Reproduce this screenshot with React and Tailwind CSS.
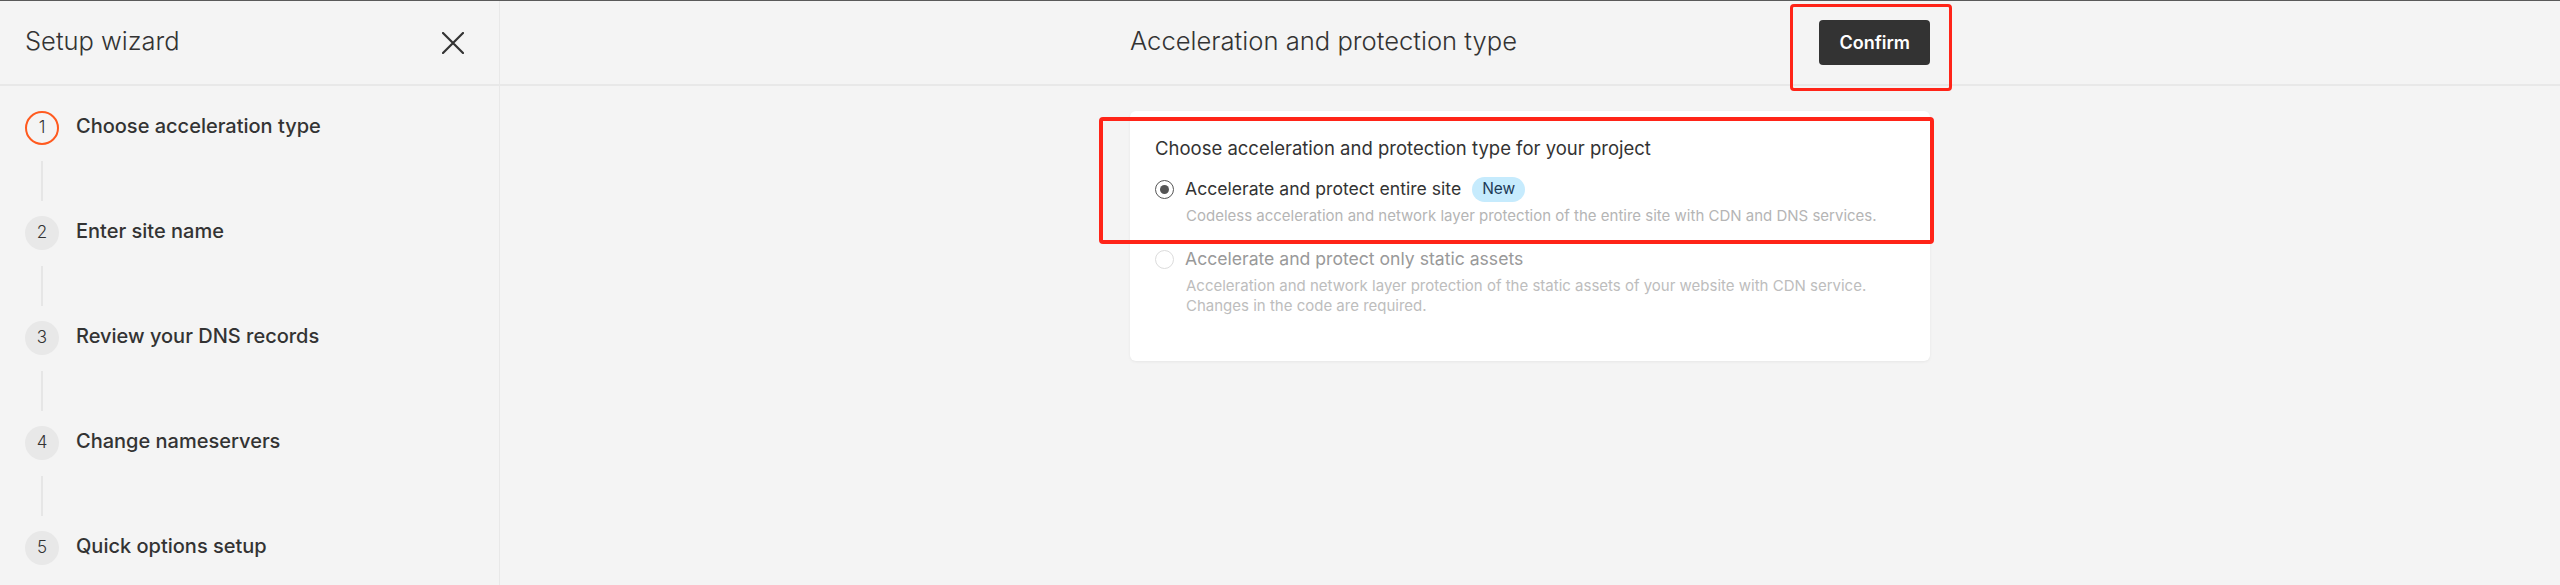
const steps = [
  'Choose acceleration type',
  'Enter site name',
  'Review your DNS records',
  'Change nameservers',
  'Quick options setup',
];

function Step({ n, label, active, last }) {
  return (
    <div>
      <div className="flex items-center gap-[17px] h-[34px]">
        <div
          className={`w-[34px] h-[34px] rounded-full flex items-center justify-center text-[17px] font-light text-[#333] shrink-0 ${
            active ? 'border-2 border-[#ff5a1f]' : 'bg-[#e8e8e8]'
          }`}
        >
          {n}
        </div>
        <span className="text-[20px] font-medium text-[#333] leading-[24px] -mt-[4px]">{label}</span>
      </div>
      {!last && <div className="ml-[16px] mt-[16px] mb-[15px] w-[2px] h-[40px] bg-[#e6e6e6]" />}
    </div>
  );
}

function Radio({ checked }) {
  return (
    <span
      className={`w-[19px] h-[19px] rounded-full border-[1.5px] flex items-center justify-center shrink-0 bg-white ${
        checked ? 'border-[#555]' : 'border-[#dcdcdc]'
      }`}
    >
      {checked && <span className="w-[9px] h-[9px] rounded-full bg-[#555]" />}
    </span>
  );
}

export default function App() {
  return (
    <div
      className="h-[585px] w-full flex flex-col bg-[#f4f4f4] border-t border-[#5a5a5a] overflow-hidden"
      style={{ fontFamily: 'Inter, "Noto Sans", sans-serif' }}
    >
      <div className="flex flex-1 min-h-0">
        <aside className="w-[500px] shrink-0 border-r border-[#e8e8e8] flex flex-col">
          <header className="h-[85px] border-b-2 border-[#e8e8e8] flex items-center justify-between pl-[25px] pr-[35px] shrink-0">
            <span className="text-[25.5px] font-light text-[#333] -mt-[2px]">Setup wizard</span>
            <svg width="22" height="22" viewBox="0 0 22 22" className="text-[#333]">
              <path d="M1 1L21 21M21 1L1 21" stroke="currentColor" strokeWidth="2.2" strokeLinecap="round" />
            </svg>
          </header>
          <div className="pl-[25px] pt-[25px]">
            {steps.map((s, i) => (
              <Step key={s} n={i + 1} label={s} active={i === 0} last={i === steps.length - 1} />
            ))}
          </div>
        </aside>

        <main className="flex-1 flex flex-col">
          <header className="h-[85px] border-b-2 border-[#e8e8e8] shrink-0">
            <div className="w-[800px] mx-auto h-full flex items-center justify-between">
              <h1 className="text-[25.6px] font-light text-[#333] -mt-[2px]">Acceleration and protection type</h1>
              <div className="relative">
                <button
                  type="button"
                  className="h-[45px] px-[20px] rounded-[4px] bg-[#333] text-white text-[18px] font-semibold"
                >
                  Confirm
                </button>
                <span className="absolute -left-[29px] -right-[22px] -top-[16px] -bottom-[26px] border-[3px] border-[#ff2418] rounded-[4px] pointer-events-none" />
              </div>
            </div>
          </header>

          <div className="pt-[25px]">
            <div className="relative w-[800px] h-[250px] mx-auto bg-white rounded-[6px] shadow-[0_1px_3px_rgba(0,0,0,0.06)] px-[25px] pt-[25px]">
              <p className="text-[18.5px] leading-[24px] text-[#333]">
                Choose acceleration and protection type for your project
              </p>

              <div className="mt-[17px] flex items-center gap-[11px] h-[24px]">
                <Radio checked />
                <span className="text-[17.6px] text-[#333]">Accelerate and protect entire site</span>
                <span className="h-[25px] px-[10px] rounded-full bg-[#c6ebfd] text-[#1d3a57] text-[15.5px] flex items-center">
                  New
                </span>
              </div>
              <p className="mt-[5px] ml-[31px] text-[15px] leading-[20px] text-[#b5b5b5]">
                Codeless acceleration and network layer protection of the entire site with CDN and DNS services.
              </p>

              <div className="mt-[21px] flex items-center gap-[11px] h-[24px]">
                <Radio />
                <span className="text-[17.6px] text-[#999]">Accelerate and protect only static assets</span>
              </div>
              <p className="mt-[5px] ml-[31px] text-[15px] leading-[20px] text-[#bdbdbd]">
                Acceleration and network layer protection of the static assets of your website with CDN service.
                <br />
                Changes in the code are required.
              </p>

              <span className="absolute -left-[31px] -right-[4px] top-[6px] h-[127px] border-4 border-[#ff2418] rounded-[4px] pointer-events-none" />
            </div>
          </div>
        </main>
      </div>
    </div>
  );
}
